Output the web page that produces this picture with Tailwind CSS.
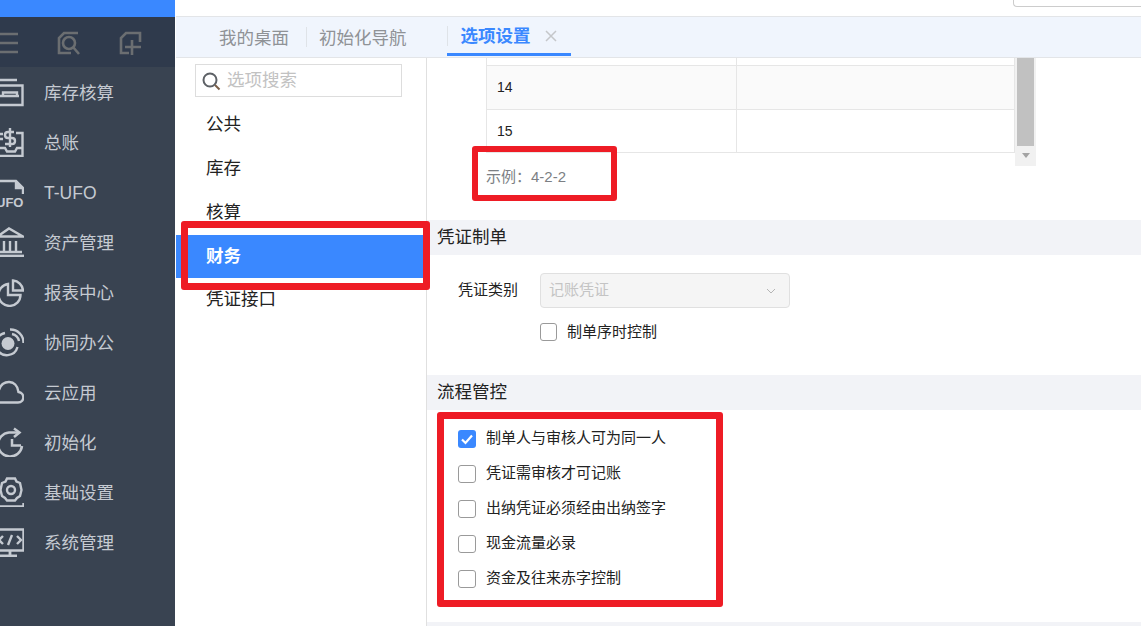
<!DOCTYPE html>
<html lang="zh">
<head>
<meta charset="utf-8">
<script src="https://cdn.jsdelivr.net/npm/@tailwindcss/browser@4"></script>
</head>
<body class="bg-white">
<div class="relative flex h-[626px] w-[1141px] overflow-hidden bg-white font-['Liberation_Sans','Noto_Sans_CJK_SC',sans-serif] text-[15px] text-[#222]">

  <!-- sidebar -->
  <aside class="flex h-full w-[175px] shrink-0 flex-col bg-[#394351] text-[17.5px] text-[#c5cad1]">
    <div class="h-[17px] bg-[#3a88ff]"></div>
    <div class="h-[50px] bg-[#2f3a4c]">
      <svg width="175" height="50" viewBox="0 17 175 50" fill="none" stroke="#6b6e71" stroke-width="2.6">
        <path d="M-2 34H18M-2 43H18M-2 52H18"/>
        <path d="M78 33H64L59 38V53H71"/>
        <circle cx="69" cy="43" r="6"/>
        <path d="M73 47L79 54"/>
        <path d="M129 53H121V38L126 33H140V42"/>
        <path d="M132 40V55M125 47H141"/>
      </svg>
    </div>

    <div class="flex h-[50px] items-center">
      <svg class="w-[30px] h-[30px] -ml-[6px] mr-[20px] shrink-0" viewBox="-6 -15 30 30" fill="none" stroke="#c5cad1" stroke-width="2.400">
        <path d="M-1 -12H17M-1 -6.500H22.500V13H-1"/>
        <path d="M3 4V0.500H17V4M-1 4H19"/>
      </svg>
      <span class="pt-[2px]">库存核算</span>
    </div>
    <div class="flex h-[50px] items-center">
      <svg class="w-[30px] h-[30px] -ml-[6px] mr-[20px] shrink-0" viewBox="-6 -15 30 30" fill="none" stroke="#c5cad1" stroke-width="2.400">
        <path d="M16 -9H22.500V14H-1M-1 6H5L7 9.500H15L17 6H22.500"/>
        <path d="M14 -10H8C4 -10 4 -4 8 -4H12C16 -4 16 2 12 2H5M10 -14V5"/>
        <path d="M-1 -8H3M-1 -3H3"/>
      </svg>
      <span class="pt-[2px]">总账</span>
    </div>
    <div class="flex h-[50px] items-center">
      <svg class="w-[30px] h-[30px] -ml-[6px] mr-[20px] shrink-0" viewBox="-6 -15 30 30" fill="none" stroke="#c5cad1" stroke-width="2.400">
        <path d="M-1 -11H16L23 -4V2"/>
        <path d="M16 -11V-4H23" fill="#c5cad1"/>
        <text x="-4" y="14.500" font-size="13" font-weight="700" fill="#c5cad1" stroke="none" font-family="Liberation Sans, sans-serif">UFO</text>
      </svg>
      <span class="pt-[2px]">T-UFO</span>
    </div>
    <div class="flex h-[50px] items-center">
      <svg class="w-[30px] h-[30px] -ml-[6px] mr-[20px] shrink-0" viewBox="-6 -15 30 30" fill="none" stroke="#c5cad1" stroke-width="2.400">
        <path d="M-1 -6.500L9 -13.500L23 -5.500H-2"/>
        <path d="M4 -1V9M10 -1V9M16 -1V9M-1 10H22"/>
        <path d="M-2 14H24" stroke-width="2.800"/>
      </svg>
      <span class="pt-[2px]">资产管理</span>
    </div>
    <div class="flex h-[50px] items-center">
      <svg class="w-[30px] h-[30px] -ml-[6px] mr-[20px] shrink-0" viewBox="-6 -15 30 30" fill="none" stroke="#c5cad1" stroke-width="2.400">
        <path d="M8 -8A11 11 0 1 0 20.500 3H8V-8Z"/>
        <path d="M13 -11.500A11 11 0 0 1 23 -1.500H13Z"/>
      </svg>
      <span class="pt-[2px]">报表中心</span>
    </div>
    <div class="flex h-[50px] items-center">
      <svg class="w-[30px] h-[30px] -ml-[6px] mr-[20px] shrink-0" viewBox="-6 -15 30 30" fill="none" stroke="#c5cad1" stroke-width="2.400">
        <circle cx="8" cy="1.500" r="6.500" fill="#c5cad1" stroke="none"/>
        <path d="M-3 7A11 11 0 0 0 17.500 5M-3 -3A11 11 0 0 1 5 -9"/>
        <path d="M10 -12.500A13 13 0 0 1 23.500 1"/>
        <path d="M12 -8A9 9 0 0 1 19 -1"/>
      </svg>
      <span class="pt-[2px]">协同办公</span>
    </div>
    <div class="flex h-[50px] items-center">
      <svg class="w-[30px] h-[30px] -ml-[6px] mr-[20px] shrink-0" viewBox="-6 -15 30 30" fill="none" stroke="#c5cad1" stroke-width="2.400">
        <path d="M-2 10.500H18C25 10.500 25 1 18.500 0C17 -13 2 -13 -1 -2"/>
      </svg>
      <span class="pt-[2px]">云应用</span>
    </div>
    <div class="flex h-[50px] items-center">
      <svg class="w-[30px] h-[30px] -ml-[6px] mr-[20px] shrink-0" viewBox="-6 -15 30 30" fill="none" stroke="#c5cad1" stroke-width="2.500">
        <path d="M22 4A12 12 0 1 1 9 -9.500H19"/>
        <path d="M14 -13.500L19.500 -9.500L14 -5"/>
        <path d="M12 -3V3.500H21"/>
      </svg>
      <span class="pt-[2px]">初始化</span>
    </div>
    <div class="flex h-[50px] items-center">
      <svg class="w-[30px] h-[30px] -ml-[6px] mr-[20px] shrink-0" viewBox="-6 -15 30 30" fill="none" stroke="#c5cad1" stroke-width="2.400">
        <path d="M7 -13.500H15L16.500 -10.500L20 -9L21.500 -2L20 4L17 6L15 8.500H7L5 6L2 4L0.500 -2L2 -9L5.500 -10.500Z"/>
        <circle cx="11" cy="-2" r="4"/>
        <path d="M-2 14.500H23.500V11"/>
      </svg>
      <span class="pt-[2px]">基础设置</span>
    </div>
    <div class="flex h-[50px] items-center">
      <svg class="w-[30px] h-[30px] -ml-[6px] mr-[20px] shrink-0" viewBox="-6 -15 30 30" fill="none" stroke="#c5cad1" stroke-width="2.400">
        <path d="M-3 -12.500H23.500V8.500H-3"/>
        <path d="M10 9V13M0 14H17" stroke-width="2.800"/>
        <path d="M3 -6L-1 -2L3 2M17 -6L21 -2L17 2M12 -7L8 3"/>
      </svg>
      <span class="pt-[2px]">系统管理</span>
    </div>
  </aside>

  <!-- main -->
  <div class="flex min-w-0 flex-1 flex-col">
    <div class="flex h-[16px] justify-end">
      <div class="h-[7px] w-[128px] rounded-bl-[4px] border-b border-l border-[#ccc]"></div>
    </div>
    <nav class="ml-px flex h-[42px] shrink-0 items-center border-y border-[#e3e5e8] bg-[#f0f5fd] text-[17.5px] text-[#8f9296]">
      <span class="ml-[43px] pt-[2px]">我的桌面</span>
      <span class="ml-[17px] mr-[12px] h-[20px] w-px bg-[#dfe3e8]"></span>
      <span class="pt-[2px]">初始化导航</span>
      <span class="ml-[40px] flex h-full items-center">
        <span class="flex h-[38px] w-[124px] items-center border-b-[3px] border-[#3a88ff] pt-[1px] text-[#3a88ff]">
          <span class="mr-[13px] h-[20px] w-px bg-[#dfe3e8]"></span>
          <span class="font-bold">选项设置</span>
          <svg class="ml-[14px]" width="12" height="12" viewBox="0 0 12 12" stroke="#c5c7ca" stroke-width="1.500"><path d="M1 1L11 11M11 1L1 11"/></svg>
        </span>
      </span>
    </nav>

    <div class="flex min-h-0 flex-1">
      <!-- options list -->
      <div class="w-[252px] shrink-0 border-r border-[#e0e0e0] pl-px text-[17.5px] text-[#222]">
        <div class="ml-[19px] mt-[6px] flex h-[33px] w-[207px] items-center border border-[#ddd] pl-[5px] text-[#c2c2c2]">
          <svg class="mr-[6px]" width="20" height="20" viewBox="0 0 20 20" fill="none" stroke="#5d6166" stroke-width="2"><circle cx="9" cy="9" r="6.500"/><path d="M14 14L18.500 18.500" stroke="#7a5f48"/></svg>
          <span>选项搜索</span>
        </div>
        <div class="mt-[6px] flex h-[44px] items-center pb-[2px] pl-[30px]">公共</div>
        <div class="flex h-[44px] items-center pb-[2px] pl-[30px]">库存</div>
        <div class="flex h-[44px] items-center pb-[2px] pl-[30px]">核算</div>
        <div class="flex h-[43px] items-center bg-[#3a88ff] pl-[30px] font-bold text-white">财务</div>
        <div class="flex h-[43px] items-center pl-[30px]">凭证接口</div>
      </div>

      <!-- content -->
      <div class="flex min-w-0 flex-1 flex-col">
        <div class="flex h-[108px] pl-[59px]">
          <div class="w-[529px] text-[14px] text-[#222]">
            <div class="flex h-[8px] border-x border-b border-[#e6e6e6]"><div class="w-[250px] border-r border-[#e6e6e6]"></div></div>
            <div class="flex h-[44px] border-x border-b border-[#e6e6e6] bg-[#fafafa]"><div class="flex w-[250px] items-center border-r border-[#e6e6e6] pl-[10px]">14</div></div>
            <div class="flex h-[43px] border-x border-b border-[#e6e6e6]"><div class="flex w-[250px] items-center border-r border-[#e6e6e6] pl-[10px]">15</div></div>
          </div>
          <div class="flex h-[108px] w-[21px] flex-col items-center bg-[#f1f1f1]">
            <div class="h-[88px] w-[17px] bg-[#c1c1c1]"></div>
            <div class="mt-[7px] h-0 w-0 border-x-[4px] border-t-[5px] border-x-transparent border-t-[#a3a3a3]"></div>
          </div>
        </div>
        <div class="mt-px h-[20px] pl-[59px] text-[15px] leading-[20px] text-[#7c7f84]">示例：4-2-2</div>

        <div class="mt-[33px] flex h-[35px] items-center bg-[#f2f3f7] pl-[10px] text-[17.500px] leading-none">凭证制单</div>
        <div class="mt-[18px] flex h-[35px] items-center">
          <span class="ml-[31px] w-[82px]">凭证类别</span>
          <div class="flex h-[35px] w-[250px] items-center justify-between rounded-[4px] border border-[#e0e0e0] bg-[#f5f5f5] pl-[8px] pr-[13px] text-[#c4c4c4]">
            <span>记账凭证</span>
            <svg width="10" height="6" viewBox="0 0 10 6" fill="none" stroke="#b5b5b5"><path d="M1 1L5 5L9 1"/></svg>
          </div>
        </div>
        <div class="ml-[113px] mt-[15px] flex h-[18px] items-center">
          <span class="h-[18px] w-[17px] rounded-[3px] border border-[#9a9a9a]"></span>
          <span class="ml-[10px]">制单序时控制</span>
        </div>

        <div class="mt-[34px] flex h-[35px] items-center bg-[#f2f3f7] pl-[10px] text-[17.500px] leading-none">流程管控</div>
        <div class="mt-[11px] flex flex-col pl-[31px]">
          <div class="flex h-[35px] items-center">
            <svg class="mr-[10px]" width="18" height="18" viewBox="0 0 18 18"><rect width="18" height="18" rx="3" fill="#3a88ff"/><path d="M4 9.500L7.500 13L14 5.500" fill="none" stroke="#fff" stroke-width="2.200"/></svg>
            <span>制单人与审核人可为同一人</span>
          </div>
          <div class="flex h-[35px] items-center">
            <span class="mr-[10px] h-[18px] w-[18px] rounded-[3px] border border-[#9a9a9a]"></span>
            <span>凭证需审核才可记账</span>
          </div>
          <div class="flex h-[35px] items-center">
            <span class="mr-[10px] h-[18px] w-[18px] rounded-[3px] border border-[#9a9a9a]"></span>
            <span>出纳凭证必须经由出纳签字</span>
          </div>
          <div class="flex h-[35px] items-center">
            <span class="mr-[10px] h-[18px] w-[18px] rounded-[3px] border border-[#9a9a9a]"></span>
            <span>现金流量必录</span>
          </div>
          <div class="flex h-[35px] items-center">
            <span class="mr-[10px] h-[18px] w-[18px] rounded-[3px] border border-[#9a9a9a]"></span>
            <span>资金及往来赤字控制</span>
          </div>
        </div>
        <div class="mt-auto h-[4px] bg-[#f2f3f7]"></div>
      </div>
    </div>
  </div>

  <!-- annotation frames over the page -->
  <div class="absolute left-[472px] top-[146px] h-[55px] w-[145px] rounded-[3px] border-[6px] border-[#ee1c25]"></div>
  <div class="absolute left-[181px] top-[221px] h-[69px] w-[249px] rounded-[3px] border-[7px] border-[#ee1c25]"></div>
  <div class="absolute left-[437px] top-[412px] h-[195px] w-[286px] rounded-[3px] border-[7px] border-[#ee1c25]"></div>
</div>
</body>
</html>
